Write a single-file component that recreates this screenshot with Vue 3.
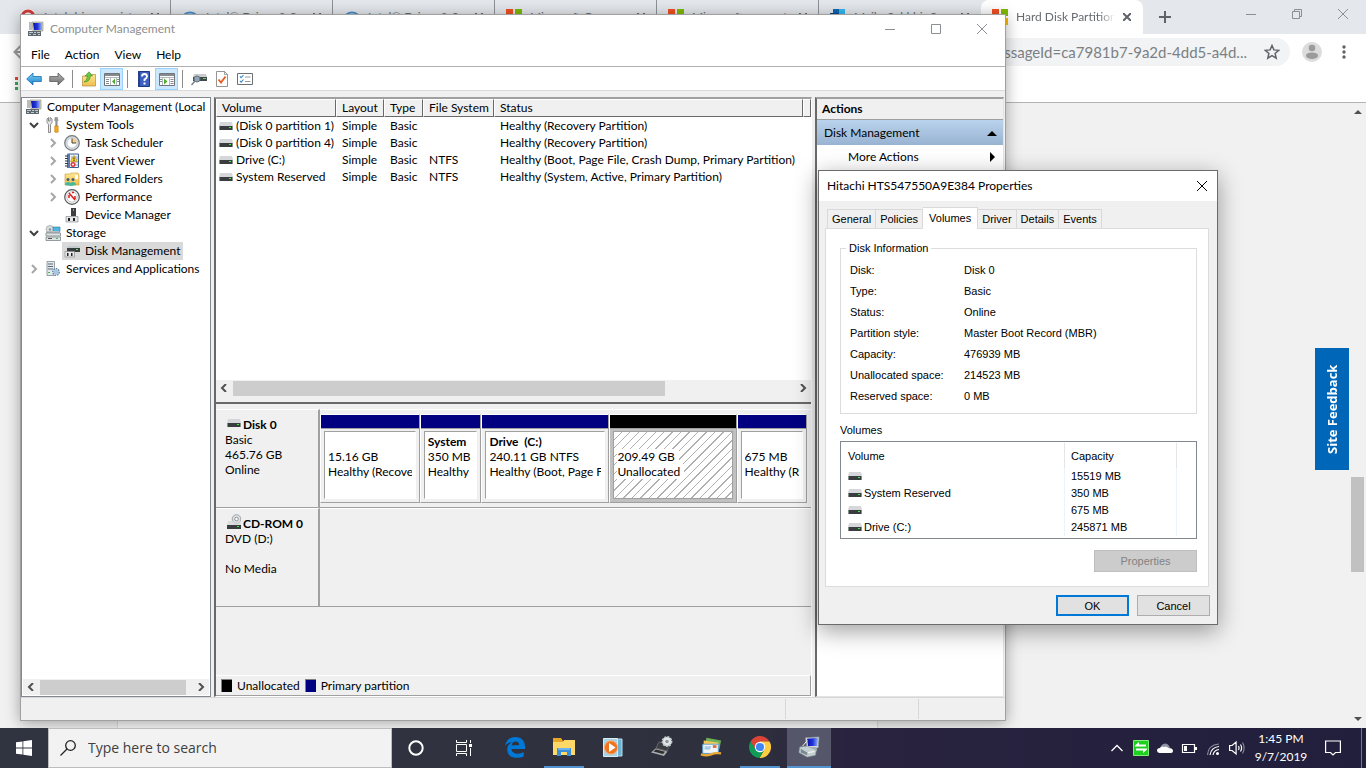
<script setup>
import { ref } from 'vue'

const backTabs = [
  { icon: 'fav-red', title: 'Intel driver assist' },
  { icon: 'fav-intel', title: 'Intel® Driver & S' },
  { icon: 'fav-intel', title: 'Intel® Driver & S' },
  { icon: 'fav-ms', title: 'Microsoft Comm' },
  { icon: 'fav-ms', title: 'Microsoft account' },
  { icon: 'fav-mail', title: 'Mail - Sukhbir S' },
]

const menus = ['File', 'Action', 'View', 'Help']

const tree = [
  { label: 'Computer Management (Local', icon: 'computer', level: 0, state: '' },
  { label: 'System Tools', icon: 'tools', level: 1, state: 'open' },
  { label: 'Task Scheduler', icon: 'clock', level: 2, state: 'closed' },
  { label: 'Event Viewer', icon: 'event', level: 2, state: 'closed' },
  { label: 'Shared Folders', icon: 'shared', level: 2, state: 'closed' },
  { label: 'Performance', icon: 'perf', level: 2, state: 'closed' },
  { label: 'Device Manager', icon: 'device', level: 2, state: 'leaf' },
  { label: 'Storage', icon: 'storage', level: 1, state: 'open' },
  { label: 'Disk Management', icon: 'diskmgmt', level: 2, state: 'leaf', selected: true },
  { label: 'Services and Applications', icon: 'services', level: 1, state: 'closed' },
]

const volumes = [
  { name: '(Disk 0 partition 1)', fs: '', status: 'Healthy (Recovery Partition)' },
  { name: '(Disk 0 partition 4)', fs: '', status: 'Healthy (Recovery Partition)' },
  { name: 'Drive (C:)', fs: 'NTFS', status: 'Healthy (Boot, Page File, Crash Dump, Primary Partition)' },
  { name: 'System Reserved', fs: 'NTFS', status: 'Healthy (System, Active, Primary Partition)' },
]

const partitions = [
  { name: '', size: '15.16 GB', status: 'Healthy (Recove', share: 100 },
  { name: 'System', size: '350 MB N', status: 'Healthy', share: 61 },
  { name: 'Drive  (C:)', size: '240.11 GB NTFS', status: 'Healthy (Boot, Page F', share: 129 },
  { name: '', size: '209.49 GB', status: 'Unallocated', share: 128, free: true },
  { name: '', size: '675 MB', status: 'Healthy (R', share: 70 },
]

const dialogTabs = ['General', 'Policies', 'Volumes', 'Driver', 'Details', 'Events']
const activeTab = ref('Volumes')

const diskInfo = [
  ['Disk:', 'Disk 0'],
  ['Type:', 'Basic'],
  ['Status:', 'Online'],
  ['Partition style:', 'Master Boot Record (MBR)'],
  ['Capacity:', '476939 MB'],
  ['Unallocated space:', '214523 MB'],
  ['Reserved space:', '0 MB'],
]

const diskVolumes = [
  ['', '15519 MB'],
  ['System Reserved', '350 MB'],
  ['', '675 MB'],
  ['Drive (C:)', '245871 MB'],
]

const taskApps = [
  { icon: 'edge', label: 'Microsoft Edge', state: '' },
  { icon: 'explorer', label: 'File Explorer', state: 'running' },
  { icon: 'player', label: 'Media Player', state: '' },
  { icon: 'laptop', label: 'System Settings', state: '' },
  { icon: 'livemail', label: 'Mail', state: '' },
  { icon: 'chrome', label: 'Google Chrome', state: 'running' },
  { icon: 'mmc', label: 'Computer Management', state: 'active' },
]
</script>

<template>
  <svg class="defs" aria-hidden="true">
    <defs>
      <linearGradient id="g-blue" x1="0" y1="0" x2="0" y2="1"><stop offset="0" stop-color="#7fd0f7" /><stop offset="1" stop-color="#1784cf" /></linearGradient>
      <linearGradient id="g-grey" x1="0" y1="0" x2="0" y2="1"><stop offset="0" stop-color="#b5b5b5" /><stop offset="1" stop-color="#6d6d6d" /></linearGradient>
      <linearGradient id="g-screen" x1="0" y1="0" x2="1" y2="0"><stop offset="0" stop-color="#0a12a8" /><stop offset=".5" stop-color="#2233d8" /><stop offset="1" stop-color="#8fb4ff" /></linearGradient>
      <linearGradient id="g-folder" x1="0" y1="0" x2="0" y2="1"><stop offset="0" stop-color="#ffe694" /><stop offset="1" stop-color="#f0bf4a" /></linearGradient>
    </defs>
    <symbol id="fav-red" viewBox="0 0 16 16"><circle cx="8" cy="8" r="8" fill="#fff" /><circle cx="8" cy="8" r="6" fill="none" stroke="#d93a3a" stroke-width="3" /></symbol>
    <symbol id="fav-intel" viewBox="0 0 16 16"><ellipse cx="8" cy="8.500" rx="7" ry="5" fill="#dfe9f2" stroke="#4b8fc8" stroke-width="2" /></symbol>
    <symbol id="fav-ms" viewBox="0 0 16 16"><path fill="#f25022" d="M0 0h7v7H0z" /><path fill="#7fba00" d="M9 0h7v7H9z" /><path fill="#00a4ef" d="M0 9h7v7H0z" /><path fill="#ffb900" d="M9 9h7v7H9z" /></symbol>
    <symbol id="fav-mail" viewBox="0 0 16 16"><path fill="#1066b5" d="M3 0h6v5H3z" /><path fill="#35b8f1" d="M9 0h6v5H9z" /><path fill="#0a4d92" d="M0 4h9v9H0z" /></symbol>
    <symbol id="computer" viewBox="0 0 16 16">
      <path fill="#d6d2c4" stroke="#8c897c" stroke-width=".6" d="M4 1h11v9H5z" /><path fill="url(#g-screen)" d="M5 2h9v7H6z" /><path fill="#a9a698" d="M8 10h4v2H8z" />
      <path fill="#b9bcbf" d="M1 1h3v8H1z" /><path fill="#5d6870" d="M0 10h13v5H0z" /><path fill="#c3c8cb" d="M1 11h4v1H1zM6 11h2v1H6zM9 11h3v1H9zM1 13h2v1H1zM5 13h3v1H5zM10 13h2v1h-2z" />
    </symbol>
    <symbol id="tools" viewBox="0 0 16 16">
      <path fill="#e8e8e8" stroke="#747474" stroke-width=".8" d="M3.500 15.500V7.500L2 5.500V2l1.500-1.500V4h1.500V.5L7 2v3.500L5.500 7.500v8z" />
      <path fill="#9b9b9b" stroke="#666" stroke-width=".4" d="M10 .5h2.500l.5 3-.8 1V9h-1.500V4.500l-1-1z" /><path fill="#f5a81c" stroke="#bd7506" stroke-width=".5" d="M9.700 9h3.500v6q-1.700 1.200-3.500 0z" />
    </symbol>
    <symbol id="clock" viewBox="0 0 16 16"><circle cx="8" cy="8" r="7.300" fill="#d7dbe0" stroke="#75787c" stroke-width="1.200" /><circle cx="8" cy="8" r="5" fill="#fff" stroke="#9fb3c7" stroke-width=".6" /><path fill="#f3cf83" d="M8 8V3.200A4.800 4.800 0 0 1 12.800 8z" /><path fill="none" stroke="#444" d="M8 3.500V8h4" /></symbol>
    <symbol id="event" viewBox="0 0 16 16"><path fill="#eef3fa" stroke="#41608f" d="M3.500 1h11v13.500h-11z" /><path fill="#5a7bb0" d="M3 1h3v14H3z" /><path stroke="#91a6c6" d="M7 4h7M7 6h7M7 9h7M7 12h7" /><path stroke="#333" d="M1 3h3M1 5.500h3M1 8h3M1 10.500h3M1 13h3" /><path fill="#ffd535" stroke="#b88d00" stroke-width=".6" d="M10 2.500l3.500 6h-7z" /><path stroke="#222" d="M10 4.500v2M10 7v1" /><circle cx="9" cy="11.500" r="2.500" fill="#e0393b" /><circle cx="9" cy="11.500" r="1" fill="#fff" /></symbol>
    <symbol id="shared" viewBox="0 0 16 16"><path fill="url(#g-folder)" stroke="#c79a36" stroke-width=".6" d="M1 3h5l1-1h7l1 2v10H1z" /><path fill="#fff" d="M11 4h3v4h-3z" /><circle cx="4" cy="8.500" r="1.500" fill="#425d78" /><circle cx="9" cy="8.500" r="1.500" fill="#425d78" /><path fill="#47b89b" d="M1 14q0-3 3-3 2 0 2.500 1Q7 11 9 11q3 0 3 3l-5 1z" /></symbol>
    <symbol id="perf" viewBox="0 0 16 16"><circle cx="8" cy="8" r="7.300" fill="#f4f4f4" stroke="#55585b" stroke-width="1.200" /><circle cx="8" cy="8" r="5.200" fill="#fff" stroke="#c7c7c7" /><path fill="none" stroke="#e01b1b" stroke-width="1.500" d="M5 9V6M5 4l6 7M11 10V7M8 3.500h2" /></symbol>
    <symbol id="device" viewBox="0 0 16 16"><path fill="#3d3f42" d="M7 1h5v8H7z" /><path fill="#50c653" d="M9 2h1v2H9z" /><path fill="#e3e5e6" stroke="#8a8d8f" stroke-width=".7" d="M2 9.500h12v5.500H2z" /><path fill="#222" d="M4 11h2v3H4zM9 11h2v3H9z" /></symbol>
    <symbol id="storage" viewBox="0 0 16 16"><circle cx="5" cy="4.500" r="4" fill="#d8dde0" stroke="#8d9498" stroke-width=".6" /><circle cx="5" cy="4.500" r="1.200" fill="#8d9498" /><path fill="#49b7e4" stroke="#38758f" stroke-width=".6" d="M8 2h7v4.500H8z" /><path fill="#b7bcc0" d="M1 8l1-2h12l1 2z" /><path fill="#e0e3e5" stroke="#6e767a" stroke-width=".7" d="M1 8h14.500v3H1zM1 12h14.500v3.500H1z" /><path fill="#3bc14b" d="M11 13h2v1h-2z" /><path fill="#555" d="M3 13h4v1H3z" /></symbol>
    <symbol id="diskmgmt" viewBox="0 0 16 16"><path fill="#c5cacd" d="M4 3h11l1 2H3z" /><path fill="#3a3d40" d="M3 5h13v4H3z" /><path fill="#50e053" d="M12 6h2v1h-2z" /><path fill="#e8e9ea" stroke="#8a8d8f" stroke-width=".7" d="M1 8.500h9.500V14H1z" /><path fill="#222" d="M3 10h1.500v3H3zM7 10h1.500v3H7z" /></symbol>
    <symbol id="services" viewBox="0 0 16 16"><path fill="#e3e8ec" stroke="#7e8b96" stroke-width=".8" d="M2 .5h7.500v14H2z" /><path stroke="#5a6a78" d="M3 3h5M3 5.500h5M3 8h5" /><path fill="#44b94c" d="M3 11h2v1H3z" /><circle cx="11" cy="11" r="3.300" fill="#c0d7ea" stroke="#5683ab" stroke-width="1.300" stroke-dasharray="1.500 1" /><circle cx="11" cy="11" r="1.200" fill="#fff" stroke="#5683ab" stroke-width=".6" /></symbol>
    <symbol id="drive" viewBox="0 0 14 8"><path fill="#d5d7da" d="M1 0h12l1 4H0z" /><path fill="#3a3d40" d="M0 4h14v4H0z" /><path fill="#8a8d90" d="M0 4h1v4H0zM13 4h1v4h-1z" /><path fill="#3aee3a" d="M10 5h2v1h-2z" /></symbol>
    <symbol id="cdrom" viewBox="0 0 14 15"><circle cx="9.500" cy="5" r="4.300" fill="#dfe2e4" stroke="#9ea3a6" /><circle cx="9.500" cy="5" r="1.800" fill="#fff" stroke="#8c9194" /><path fill="#d5d7da" d="M1 7h12l1 4H0z" opacity=".75" /><path fill="#3a3d40" d="M0 11h14v4H0z" /><path fill="#3aee3a" d="M10 12h2v1h-2z" /></symbol>
    <symbol id="t-back" viewBox="0 0 16 16"><path fill="url(#g-blue)" stroke="#1b6ca8" stroke-width=".8" d="M.7 8L7 2v3.500h8.300v5H7V14z" /></symbol>
    <symbol id="t-fwd" viewBox="0 0 16 16"><path fill="url(#g-grey)" stroke="#5c5c5c" stroke-width=".8" d="M15.300 8L9 2v3.500H.7v5H9V14z" /></symbol>
    <symbol id="t-folder" viewBox="0 0 16 16"><path fill="url(#g-folder)" stroke="#b28e3d" stroke-width=".7" d="M1.500 5H8l1-1.500h5.500V15h-13z" /><path fill="#6cc644" stroke="#3a9222" stroke-width=".6" d="M3 11q3-1 3.500-6H4L8 .8 11.500 5H9.300q0 6-6.300 6z" /></symbol>
    <symbol id="t-tree" viewBox="0 0 16 16"><path fill="#fff" stroke="#71757a" d="M.5 2.500h15v12H.5z" /><path fill="#868b90" d="M1 3h14v2H1z" /><path stroke="#b5b9bd" d="M1 6.500h14M6.500 7v7M12.500 7v7" /><path stroke="#868b90" d="M2 8.500h3M2 10.500h3M2 12.500h3M13 8.500h2M13 10.500h2" /><path fill="#4cae32" d="M11 7.500v6L8 10.500z" /></symbol>
    <symbol id="t-action" viewBox="0 0 16 16"><path fill="#fff" stroke="#71757a" d="M.5 2.500h15v12H.5z" /><path fill="#868b90" d="M1 3h14v2H1z" /><path stroke="#b5b9bd" d="M1 6.500h14M3.500 7v7M10.500 7v7" /><path stroke="#868b90" d="M11.500 8.500h3M11.500 10.500h3M11.500 12.500h3M1 8.500h2M1 10.500h2" /><path fill="#4cae32" d="M5 7.500v6l3.500-3z" /></symbol>
    <symbol id="t-help" viewBox="0 0 16 16"><path fill="#3f60bd" stroke="#1e3983" d="M2.500.5h11v15h-11z" /><path fill="#253f8a" d="M2 0h2v16H2z" /><path fill="none" stroke="#fff" stroke-width="1.800" d="M6 5.500Q6 3 8.500 3T11 5.500q0 1.500-2.500 3V10" /><path fill="#fff" d="M7.500 11.500h2v2h-2z" /></symbol>
    <symbol id="t-disk" viewBox="0 0 16 16"><path fill="#c9cccf" d="M3 3h12l1 3H2z" /><path fill="#44484c" d="M2 6h14v4H2z" /><path fill="#43df4a" d="M12 7h3v1h-3z" /><circle cx="6" cy="8" r="3" fill="#8fa7b6" stroke="#65727c" /><path stroke="#777f86" stroke-width="1.500" d="M4 10l-3.500 4" /></symbol>
    <symbol id="t-check" viewBox="0 0 16 16"><path fill="#fff" stroke="#7a7a7a" stroke-width=".8" d="M2.500.5h8l3 3v12h-11z" /><path fill="none" stroke="#7a7a7a" stroke-width=".7" d="M10.500.5v3h3" /><path fill="none" stroke="#e65a1e" stroke-width="1.800" d="M4.500 8.500l2.500 3 4.500-6" /></symbol>
    <symbol id="t-list" viewBox="0 0 16 16"><path fill="#fff" stroke="#6c6f72" d="M.5 2.500h15v11H.5z" /><path stroke="#999" d="M8 6h5.500M8 10.500h5.500" /><path fill="none" stroke="#3c8ac9" stroke-width="1.100" d="M3 5.500l1.200 1.200L6.500 4M3 10l1.200 1.200 2.300-2.700" /></symbol>
    <symbol id="edge" viewBox="0 0 22 22"><path fill="#0078d7" d="M1 10C2 4 6 1 11.500 1 17.500 1 21 5 21 10.500V13H7.500c.3 3.300 3 4.700 6 4.700 2.300 0 4.500-.7 6.200-1.700v4.300c-2 1-4.300 1.500-7 1.500C7 21.800 3.200 18.500 3.200 13.500c0-3.500 2-6 4.800-7.300C4.800 6.400 2.500 8 1 10zm6.600-.7h7.600C15.200 6.800 14 5.500 11.700 5.500 9.500 5.500 8 7 7.600 9.300z" /></symbol>
    <symbol id="explorer" viewBox="0 0 22 22"><path fill="#e7a829" d="M0 2h8l2 3h12v4H0z" /><path fill="#ffd867" d="M0 6h10l1-2h11v15H0z" /><path fill="#3b8fd9" d="M4 12h14v8h-4v-4H8v4H4z" /><path fill="#6db4ee" d="M5 12h12v2H5z" /></symbol>
    <symbol id="player" viewBox="0 0 22 22"><path fill="#6cb3d8" stroke="#b9dfef" d="M5 3h15v17H5z" /><path fill="#a7d3e7" stroke="#d8edf5" d="M1.500 2.500h14v18h-14z" /><circle cx="9" cy="11.500" r="6.700" fill="#ee7622" stroke="#ffb37a" /><path fill="#fff" d="M7 7l6.500 4.500L7 16z" /></symbol>
    <symbol id="laptop" viewBox="0 0 22 22"><path fill="#3a3c3f" stroke="#77797c" stroke-width=".7" d="M8 6l11 2.500-3 6.500L5 12z" /><path fill="#a9abad" d="M4.500 12.500L16.500 15.500 13 20 0 16.500z" /><path fill="#2c2e30" d="M5 13.500l9 2.200-2 2.300-9.500-2.500z" /><circle cx="16" cy="5.500" r="4.500" fill="#e4e8eb" stroke="#c4cbd0" stroke-width="1.800" stroke-dasharray="2 1" /><circle cx="16" cy="5.500" r="1.800" fill="#8f979c" /></symbol>
    <symbol id="livemail" viewBox="0 0 24 22"><path fill="#6ab356" d="M7 1l16 3-2 10L5 11z" /><path fill="#f3c65a" d="M4 4l16 2-1 12-15-2z" /><path fill="#eef5fb" stroke="#5fa5d6" d="M3 8h17v10H3z" /><path fill="#e66a38" d="M14 9h4v3h-4z" /><path stroke="#69a7d8" d="M5 11h7M5 13h6" /><path fill="none" stroke="#e9a735" stroke-width="2.500" d="M1 19q6 2 11 0t11-1" /></symbol>
    <symbol id="chrome" viewBox="0 0 22 22"><path fill="#db4437" d="M1.500 5.500A11 11 0 0 1 20.500 5.500L11 6 6 14z" /><path fill="#ffcd40" d="M20.500 5.500A11 11 0 0 1 10.500 22L15.500 13.500 11 5.500z" /><path fill="#0f9d58" d="M1.500 5.500A11 11 0 0 0 10.500 22L15 14 7 14z" /><circle cx="11" cy="11" r="5.200" fill="#fff" /><circle cx="11" cy="11" r="4.100" fill="#4285f4" /></symbol>
    <symbol id="mmc" viewBox="0 0 24 24"><path fill="#d7dbdc" stroke="#8b9497" stroke-width=".7" d="M8 2l15-1-1 12H10z" /><path fill="url(#g-screen)" d="M10 3l12-1-1 9H11z" /><path fill="#a7b1b5" d="M11 12h9l1 4H10z" /><path fill="#c5cfd2" stroke="#8b989e" stroke-width=".7" d="M2 12l8-1 10 4-1 6-9 2-9-5z" /><path fill="#7b898f" d="M3 14l7 4v3l-7-3z" /><path stroke="#fff" d="M5 11l5-6M11 18l7-1" /></symbol>
  </svg>

  <div class="desktop">
    <section class="browser" aria-label="Browser">
      <div class="tabstrip">
        <div v-for="(t, i) in backTabs" :key="i" class="tab">
          <svg class="i16"><use :href="'#' + t.icon" /></svg><span>{{ t.title }}</span>
          <svg class="x" viewBox="0 0 8 8"><path d="M0 0l8 8M8 0L0 8" stroke="#5f6368" stroke-width="2" /></svg>
        </div>
        <div class="tab current">
          <svg class="i16"><use href="#fav-ms" /></svg><span>Hard Disk Partition</span>
          <svg class="x" viewBox="0 0 8 8"><path d="M0 0l8 8M8 0L0 8" stroke="#5f6368" stroke-width="2" /></svg>
        </div>
        <svg class="plus" viewBox="0 0 12 12"><path d="M6 0v12M0 6h12" stroke="#5f6368" stroke-width="2" /></svg>
        <div class="wbtns">
          <svg viewBox="0 0 10 10"><path d="M0 5.500h10" /></svg>
          <svg viewBox="0 0 10 10"><path d="M.5 2.500h7v7h-7zM2.500 2.500v-2h7v7h-2" /></svg>
          <svg viewBox="0 0 10 10"><path d="M0 0l10 10M10 0L0 10" /></svg>
        </div>
      </div>
      <div class="addressbar">
        <svg class="back" viewBox="0 0 16 16"><path d="M15 8H2M8 1.500L1.500 8 8 14.500" fill="none" stroke="#9a9a9a" stroke-width="2" /></svg>
        <div class="omnibox">
          <span>messageId=ca7981b7-9a2d-4dd5-a4d...</span>
          <svg class="i16" viewBox="0 0 16 16"><path d="M8 1.500l1.900 4.400 4.800.4-3.600 3.100 1.100 4.700L8 11.600l-4.200 2.500 1.100-4.700L1.300 6.300l4.800-.4z" fill="none" stroke="#5f6368" stroke-width="1.500" /></svg>
        </div>
        <svg class="avatar" viewBox="0 0 20 20"><circle cx="10" cy="10" r="10" fill="#dcdcdc" /><circle cx="10" cy="6" r="3.300" fill="#9b9b9b" /><ellipse cx="10" cy="13.700" rx="6" ry="3.300" fill="#9b9b9b" /></svg>
        <svg class="dots" viewBox="0 0 4 14"><circle cx="2" cy="2" r="1.700" /><circle cx="2" cy="7" r="1.700" /><circle cx="2" cy="12" r="1.700" /></svg>
      </div>
      <div class="bookmarks">
        <svg viewBox="0 0 14 14"><path fill="#ea4335" d="M0 0h3v3H0zM5 0h3v3H5z" /><path fill="#34a853" d="M0 5h3v3H0zM0 10h3v3H0z" /><path fill="#4285f4" d="M5 5h3v3H5z" /><path fill="#fbbc05" d="M5 10h3v3H5z" /></svg>
      </div>
      <div class="page">
        <div class="content"><div class="card"></div></div>
        <button class="feedback" type="button">Site Feedback</button>
        <div class="vscroll">
          <svg viewBox="0 0 8 4"><path d="M0 4l4-4 4 4z" /></svg>
          <div class="thumb"></div>
          <svg viewBox="0 0 8 4"><path d="M0 0l4 4 4-4z" /></svg>
        </div>
      </div>
    </section>

    <section class="mgmt" aria-label="Computer Management">
      <header class="titlebar">
        <svg class="i16"><use href="#computer" /></svg>
        <h1>Computer Management</h1>
        <div class="wbtns">
          <svg viewBox="0 0 10 10"><path d="M0 5.500h10" /></svg>
          <svg viewBox="0 0 10 10"><path d="M.5.5h9v9h-9z" /></svg>
          <svg viewBox="0 0 10 10"><path d="M0 0l10 10M10 0L0 10" /></svg>
        </div>
      </header>
      <nav class="menubar"><button v-for="m in menus" :key="m" type="button">{{ m }}</button></nav>
      <div class="toolbar">
        <button type="button" aria-label="Back"><svg class="i16"><use href="#t-back" /></svg></button>
        <button type="button" aria-label="Forward"><svg class="i16"><use href="#t-fwd" /></svg></button>
        <i></i>
        <button type="button" aria-label="Up one level"><svg class="i16"><use href="#t-folder" /></svg></button>
        <button type="button" aria-label="Console tree" class="on"><svg class="i16"><use href="#t-tree" /></svg></button>
        <i></i>
        <button type="button" aria-label="Help"><svg class="i16"><use href="#t-help" /></svg></button>
        <button type="button" aria-label="Action pane" class="on"><svg class="i16"><use href="#t-action" /></svg></button>
        <i></i>
        <button type="button" aria-label="Disk"><svg class="i16"><use href="#t-disk" /></svg></button>
        <button type="button" aria-label="Check"><svg class="i16"><use href="#t-check" /></svg></button>
        <button type="button" aria-label="List"><svg class="i16"><use href="#t-list" /></svg></button>
      </div>
      <div class="workspace">
        <aside class="treepane">
          <ul>
            <li v-for="n in tree" :key="n.label" :class="['l' + n.level, { selected: n.selected }]">
              <span v-if="n.level" class="chev">
                <svg v-if="n.state === 'open'" viewBox="0 0 10 10"><path d="M1 3l4 4 4-4" stroke="#404040" /></svg>
                <svg v-else-if="n.state === 'closed'" viewBox="0 0 10 10"><path d="M3 1l4 4-4 4" stroke="#a6a6a6" /></svg>
              </span>
              <span class="node"><svg class="i16"><use :href="'#' + n.icon" /></svg><b>{{ n.label }}</b></span>
            </li>
          </ul>
          <div class="hscroll">
            <svg viewBox="0 0 8 8"><path d="M6 0L2 4l4 4" /></svg><div class="track"><div class="bar tree-bar"></div></div><svg viewBox="0 0 8 8"><path d="M2 0l4 4-4 4" /></svg>
          </div>
        </aside>

        <main class="center">
          <div class="vollist">
            <div class="tablewrap">
              <table>
                <colgroup><col class="c1" /><col class="c2" /><col class="c3" /><col class="c4" /><col class="c5" /><col /></colgroup>
                <thead><tr><th>Volume</th><th>Layout</th><th>Type</th><th>File System</th><th>Status</th><th></th></tr></thead>
                <tbody>
                  <tr v-for="v in volumes" :key="v.name">
                    <td class="first"><svg class="drv"><use href="#drive" /></svg>{{ v.name }}</td>
                    <td>Simple</td><td>Basic</td><td>{{ v.fs }}</td><td>{{ v.status }}</td><td></td>
                  </tr>
                </tbody>
              </table>
            </div>
            <div class="hscroll">
              <svg viewBox="0 0 8 8"><path d="M6 0L2 4l4 4" /></svg><div class="track"><div class="bar vol-bar"></div></div><svg viewBox="0 0 8 8"><path d="M2 0l4 4-4 4" /></svg>
            </div>
            <div class="lip"></div>
          </div>

          <div class="graph">
            <div class="diskrow">
              <div class="disklabel">
                <h2><svg class="drv"><use href="#drive" /></svg>Disk 0</h2>
                <p>Basic</p><p>465.76 GB</p><p>Online</p>
              </div>
              <div class="parts">
                <div v-for="(p, i) in partitions" :key="i" class="part" :class="{ free: p.free }" :style="{ flexGrow: p.share }">
                  <div class="band"></div>
                  <div class="body"><div class="box"><div class="txt">
                    <strong>{{ p.name }}</strong><span>{{ p.size }}</span><span>{{ p.status }}</span>
                  </div></div></div>
                </div>
              </div>
            </div>
            <div class="diskrow">
              <div class="disklabel">
                <h2><svg class="cd"><use href="#cdrom" /></svg>CD-ROM 0</h2>
                <p>DVD (D:)</p><p>&nbsp;</p><p>No Media</p>
              </div>
              <div class="parts"></div>
            </div>
            <div class="legend"><i class="black"></i>Unallocated<i class="navy"></i>Primary partition</div>
          </div>
        </main>

        <aside class="actions">
          <h2>Actions</h2>
          <button type="button" class="group">Disk Management<svg viewBox="0 0 10 10"><path d="M0 8l5-5 5 5z" /></svg></button>
          <button type="button" class="more">More Actions<svg viewBox="0 0 10 10"><path d="M3 0l5 5-5 5z" /></svg></button>
        </aside>
      </div>
      <footer class="status"><span></span><span></span><span></span></footer>
    </section>

    <section class="dialog" role="dialog" aria-labelledby="dlg-title">
      <header>
        <h1 id="dlg-title">Hitachi HTS547550A9E384 Properties</h1>
        <button type="button" aria-label="Close"><svg viewBox="0 0 10 10"><path d="M0 0l10 10M10 0L0 10" /></svg></button>
      </header>
      <div class="dtabs" role="tablist">
        <button v-for="t in dialogTabs" :key="t" type="button" role="tab" :aria-selected="t === activeTab" :class="{ sel: t === activeTab }" @click="activeTab = t">{{ t }}</button>
      </div>
      <div class="dpanel">
        <fieldset>
          <legend>Disk Information</legend>
          <dl><template v-for="r in diskInfo" :key="r[0]"><dt>{{ r[0] }}</dt><dd>{{ r[1] }}</dd></template></dl>
        </fieldset>
        <h2>Volumes</h2>
        <div class="dlist">
          <table>
            <colgroup><col /><col class="cap" /><col class="rest" /></colgroup>
            <thead><tr><th>Volume</th><th>Capacity</th><th></th></tr></thead>
            <tbody>
              <tr v-for="(v, i) in diskVolumes" :key="i">
                <td><svg class="drv"><use href="#drive" /></svg>{{ v[0] }}</td><td>{{ v[1] }}</td><td></td>
              </tr>
            </tbody>
          </table>
        </div>
        <div class="prow"><button type="button" class="btn wide" disabled>Properties</button></div>
      </div>
      <div class="dbtns"><button type="button" class="btn ok">OK</button><button type="button" class="btn">Cancel</button></div>
    </section>

    <footer class="taskbar">
      <button class="start" type="button" aria-label="Start"><svg viewBox="0 0 16 16"><path fill="#fff" d="M0 2.300l6.500-.9v6.200H0zM7.300 1.300L16 0v7.600H7.300zM0 8.400h6.500v6.200L0 13.700zM7.300 8.400H16V16l-8.700-1.300z" /></svg></button>
      <label class="search">
        <svg viewBox="0 0 16 16"><circle cx="10.500" cy="5.500" r="4.800" /><path d="M7 9L.5 15.500" /></svg>
        <input type="text" placeholder="Type here to search" aria-label="Type here to search" />
      </label>
      <button class="sys" type="button" aria-label="Cortana"><svg viewBox="0 0 16 16"><circle cx="8" cy="8" r="6.700" fill="none" stroke="#fff" stroke-width="2" /></svg></button>
      <button class="sys" type="button" aria-label="Task View"><svg viewBox="0 0 16 16"><path fill="none" stroke="#fff" d="M.5 0v2.500h10V0M.5 16v-2.500h10V16M.5 4.500h10v7H.5zM14.500 0v3M14.500 8v8" /><path fill="#fff" d="M13 4h3v3h-3z" /></svg></button>
      <div class="apps">
        <button v-for="a in taskApps" :key="a.icon" type="button" :aria-label="a.label" :class="a.state"><svg><use :href="'#' + a.icon" /></svg></button>
      </div>
      <div class="tray">
        <svg viewBox="0 0 16 16"><path fill="none" stroke="#fff" stroke-width="1.300" d="M2.500 11L8 5.500l5.500 5.500" /></svg>
        <svg viewBox="0 0 16 16"><path fill="#1fd021" stroke="#80f07a" d="M.5.5h15v15H.5z" /><path fill="#fff" d="M2 5.500L6 2v2.500h7v2H2zM14 9.500L10 13v-2.500H3v-2h11z" /></svg>
        <svg viewBox="0 0 16 16"><path fill="#8f92a0" d="M3 10q0-6 5.500-6.500Q12 4 13 8l-5 2z" /><path fill="#fff" d="M2.500 13Q0 12.500 0 10.500 0 8 3 8q1.500-2.500 4-1 2-1.500 4.500 1Q16 8 16 11q0 2-2 2z" /></svg>
        <svg viewBox="0 0 16 16"><path fill="none" stroke="#fff" stroke-width="1.200" d="M1.500 4.500h12v8h-12z" /><path fill="#fff" d="M3 6h3v5H3zM14 7h2v3h-2z" /></svg>
        <svg viewBox="0 0 16 16"><path fill="none" stroke="#8c8aa0" stroke-width="1.200" d="M2.500 15Q3 5 14 4" /><path fill="none" stroke="#fff" stroke-width="1.200" d="M5 15q1-7.500 9-8.500M8 15q1-5 6-5.500" /><circle cx="12.500" cy="13.500" r="1.500" fill="#fff" /></svg>
        <svg viewBox="0 0 16 16"><path fill="none" stroke="#fff" stroke-width="1.200" d="M.6 5.500h2.500l4-3.500v12l-4-3.500H.6zM9.500 6q1.200 2 0 4M11.500 4.500q2.200 3.500 0 7" /><path fill="none" stroke="#8c8aa0" stroke-width="1.100" d="M13.500 2.500q3.300 5.500 0 11" /></svg>
      </div>
      <div class="time"><span>1:45 PM</span><span>9/7/2019</span></div>
      <svg class="note" viewBox="0 0 16 16"><path fill="none" stroke="#fff" stroke-width="1.200" d="M.6 1h14.800v11.500H10.500L8 15l-2.500-2.500H.6z" /></svg>
      <i class="peek"></i>
    </footer>
  </div>
</template>

<style>
html, body, #app { height: 100%; }
body { margin: 0; overflow: hidden; }
</style>

<style scoped>
* { box-sizing: border-box; }
button { font: inherit; color: inherit; border: 0; padding: 0; margin: 0; background: none; }
h1, h2, p, ul, dl, dd { margin: 0; padding: 0; font: inherit; }
svg { display: block; flex: none; }
.defs { position: absolute; width: 0; height: 0; }
.i16 { width: 16px; height: 16px; }
.drv { width: 14px; height: 8px; }
.cd { width: 14px; height: 15px; }
.desktop { position: relative; height: 100%; display: flex; flex-direction: column; font: 12px/18px Lato, "Open Sans", sans-serif; color: #000; overflow: hidden; }

.browser { flex: 1; min-height: 0; display: flex; flex-direction: column; background: #fff; }
.tabstrip { display: flex; align-items: center; height: 34px; padding-left: 9px; background: #e4e8ec; color: #686c70; }
.tab { flex: 0 0 162px; height: 34px; display: flex; align-items: center; gap: 8px; padding-left: 11px; border-right: 1px solid #8e9297; overflow: hidden; white-space: nowrap; }
.tab:nth-child(6) { border-right: 0; }
.tab span { width: 99px; overflow: hidden; }
.tab.current { background: #fff; border: 0; border-radius: 8px 8px 0 0; }
.tab.current span { -webkit-mask-image: linear-gradient(90deg, #000 84%, transparent); mask-image: linear-gradient(90deg, #000 84%, transparent); }
.tab .x { width: 8px; height: 8px; }
.plus { width: 12px; height: 12px; margin-left: 16px; }
.wbtns { margin-left: auto; display: flex; gap: 36px; padding-right: 18px; }
.wbtns svg { width: 10px; height: 10px; }
.wbtns path { fill: none; stroke: #8b8e92; }
.tabstrip .wbtns { margin-bottom: 6px; }
.addressbar { display: flex; align-items: center; height: 36px; padding: 0 20px 0 13px; }
.back { width: 16px; height: 16px; }
.omnibox { flex: 1; height: 28px; margin: 0 12px 0 100px; padding-right: 10px; display: flex; align-items: center; justify-content: flex-end; gap: 17px; border-radius: 14px; background: #f1f3f4; color: #7c8084; font-size: 15px; }
.avatar { width: 20px; height: 20px; }
.dots { width: 4px; height: 14px; margin-left: 20px; fill: #5f6368; }
.bookmarks { height: 33px; padding: 7px 15px; border-bottom: 1px solid #b4b4b4; }
.bookmarks svg { width: 14px; height: 14px; }
.page { flex: 1; min-height: 0; display: flex; background: #f1f1f1; }
.content { flex: 1; display: flex; align-items: flex-end; padding-left: 117px; }
.card { width: 761px; height: 100%; background: #f9f9f9; border: 1px solid #dcdcdc; border-width: 0 1px; }
.feedback { align-self: flex-start; width: 34px; height: 122px; margin-top: 245px; background: #0067b8; color: #fff; font: 700 13px/18px "Open Sans", "Noto Sans", sans-serif; writing-mode: vertical-rl; text-orientation: mixed; rotate: 180deg; }
.vscroll { width: 17px; display: flex; flex-direction: column; align-items: center; padding: 7px 0; background: #f1f1f1; }
.vscroll svg { width: 8px; height: 4px; fill: #505050; }
.thumb { width: 13px; height: 95px; margin: 363px 0 auto; background: #c1c1c1; }

.mgmt { position: absolute; left: 20px; top: 14px; right: 360px; bottom: 47px; display: flex; flex-direction: column; background: #f0f0f0; border: 1px solid #a0a0a0; box-shadow: 0 2px 14px rgba(0, 0, 0, .35); }
.titlebar { display: flex; align-items: center; gap: 6px; height: 28px; padding-left: 7px; background: #fff; color: #8f8f8f; }
.menubar { display: flex; gap: 15px; height: 24px; padding: 0 10px; background: #fff; border-bottom: 1px solid #b0b0b0; }
.toolbar { display: flex; align-items: flex-end; height: 24px; padding-left: 1px; background: #fff; border-bottom: 1px solid #dadada; }
.toolbar button { width: 23px; height: 22px; display: flex; align-items: center; justify-content: center; }
.toolbar .on { background: #cce8ff; border: 1px solid #99d1ff; }
.toolbar i { align-self: center; width: 1px; height: 18px; margin: 0 4px; background: #8d8d8d; }
.workspace { flex: 1; min-height: 0; display: grid; grid-template-columns: 190px minmax(0, 1fr) 189px; gap: 3px; padding: 6px 1px 0 0; }
.treepane { display: flex; flex-direction: column; background: #fff; border: 1px solid #828790; min-width: 0; overflow: hidden; }
.treepane ul { flex: 1; list-style: none; }
.treepane li { display: flex; height: 18px; white-space: nowrap; }
.l0 { padding-left: 2px; }
.l1 { padding-left: 4px; }
.l2 { padding-left: 23px; }
.chev { width: 16px; display: flex; align-items: center; justify-content: center; margin-right: 1px; }
.chev svg { width: 10px; height: 10px; fill: none; stroke-width: 2; }
.node { display: flex; align-items: center; gap: 5px; padding: 0 3px 0 2px; }
.node b { font-weight: 400; }
.selected .node { background: #d9d9d9; }
.hscroll { display: flex; align-items: center; height: 16px; margin: 1px; padding: 0 4px; background: #f0f0f0; }
.hscroll svg { width: 8px; height: 8px; fill: none; stroke: #505050; stroke-width: 2; }
.track { flex: 1; height: 15px; margin: 0 5px; }
.bar { height: 15px; background: #cdcdcd; }
.tree-bar { width: 96%; }
.vol-bar { width: 77%; }

.center { display: flex; flex-direction: column; min-width: 0; border: 2px solid #696969; border-top-color: #a0a0a0; border-width: 2px 1px 1px 2px; border-right-color: #fff; border-bottom-color: #fff; }
.vollist { flex: 0 0 305px; display: flex; flex-direction: column; background: #fff; }
.tablewrap { flex: 1; overflow: hidden; }
table { width: 100%; table-layout: fixed; border-collapse: separate; border-spacing: 0; }
.c1 { width: 120px; } .c2 { width: 48px; } .c3 { width: 39px; } .c4 { width: 71px; } .c5 { width: 309px; }
.vollist th { height: 18px; padding: 0 0 0 5px; background: #f0f0f0; border: 1px solid #fff; border-right-color: #696969; border-bottom-color: #696969; font-weight: 400; text-align: left; line-height: 16px; white-space: nowrap; }
.vollist td { height: 17px; padding: 0 0 0 6px; line-height: 17px; white-space: nowrap; }
.vollist td.first { padding-left: 3px; }
td .drv { display: inline-block; margin-right: 3px; }
.vollist .hscroll { margin: 0; }
.lip { height: 8px; background: #f0f0f0; border-bottom: 2px solid #696969; }
.graph { flex: 1; display: flex; flex-direction: column; padding-top: 5px; background: #f0f0f0; }
.diskrow { display: grid; grid-template-columns: 104px minmax(0, 1fr); height: 99px; }
.disklabel { padding: 7px 0 0 9px; line-height: 15px; border: 1px solid #fff; border-left: 0; border-right: 2px solid #a0a0a0; border-bottom-color: #a0a0a0; }
.disklabel h2 { display: flex; align-items: center; gap: 2px; height: 15px; padding-left: 2px; font-weight: 700; }
.disklabel .drv, .disklabel .cd { margin-bottom: 4px; }
.parts { display: flex; padding: 4px 4px 4px 0; border-top: 1px solid #fff; border-bottom: 1px solid #a0a0a0; }
.part { flex: 1 1 0; min-width: 0; display: flex; flex-direction: column; border: 1px solid #fff; border-right: 1px solid #a0a0a0; border-bottom-color: #a0a0a0; }
.band { height: 13px; background: #000080; }
.free .band { background: #000; }
.body { flex: 1; display: flex; padding: 2px 3px 3px; border-top: 1px solid #a0a0a0; }
.box { flex: 1; min-width: 0; padding: 2px 3px 0; overflow: hidden; background: #fff; border: 1px solid #a0a0a0; border-right-color: #fff; border-bottom-color: #fff; }
.free .body { background: #c0c0c0; }
.free .box { border-color: #a0a0a0; background: repeating-linear-gradient(135deg, #fff 0 5px, #b0b0b0 5px 6px); }
.txt { display: flex; flex-direction: column; align-items: flex-start; overflow: hidden; white-space: pre; line-height: 15px; }
.txt strong { height: 15px; font-weight: 700; }
.free .txt span { background: #fff; padding-right: 4px; }
.legend { display: flex; align-items: center; height: 21px; margin-top: auto; padding-left: 5px; border-top: 1px solid #fff; border-bottom: 1px solid #a0a0a0; border-right: 1px solid #a0a0a0; }
.legend i { width: 11px; height: 13px; margin-right: 5px; background: #000; border: 1px solid #808080; border-width: 1px 0 0 1px; }
.legend .navy { margin-left: 5px; background: #000080; }

.actions { background: #fff; border: 2px solid #696969; border-top-color: #a0a0a0; border-width: 2px 1px 1px 2px; border-right-color: #e3e3e3; border-bottom-color: #e3e3e3; }
.actions h2 { height: 21px; padding-left: 5px; line-height: 20px; background: #f0f0f0; border-bottom: 1px solid #a0a0a0; font-weight: 700; }
.actions button { display: flex; align-items: center; justify-content: space-between; width: 100%; padding-right: 6px; text-align: left; }
.actions .group { height: 25px; padding-left: 7px; background: linear-gradient(#bad3ed, #98b3d2); }
.actions .more { height: 24px; padding-left: 31px; }
.actions svg { width: 10px; height: 10px; }
.status { display: grid; grid-template-columns: 1fr 133px 87px; height: 23px; padding: 1px 0; border-top: 1px solid #d7d7d7; }
.status span + span { border-left: 1px solid #d7d7d7; }

.dialog { position: absolute; left: 818px; top: 170px; width: 400px; background: #f0f0f0; border: 1px solid #6b6b6b; box-shadow: 0 6px 22px rgba(0, 0, 0, .38); font: 11px/16px "Liberation Sans", Arial, sans-serif; }
.dialog header { display: flex; align-items: center; justify-content: space-between; height: 30px; padding: 0 10px 0 8px; background: #fff; font: 12px/18px Lato, "Open Sans", sans-serif; }
.dialog header svg { width: 10px; height: 10px; fill: none; stroke: #000; }
.dtabs { display: flex; align-items: flex-end; height: 27px; padding-left: 8px; }
.dtabs button { height: 19px; padding: 0 4px; background: #f0f0f0; border: 1px solid #d9d9d9; border-left-width: 0; border-bottom: 0; }
.dtabs button:first-child { border-left-width: 1px; }
.dtabs .sel { position: relative; height: 22px; padding: 0 6px 2px; margin-bottom: -1px; background: #fff; }
.dpanel { margin: 0 8px 0 6px; padding: 11px 11px 14px 14px; background: #fff; border: 1px solid #dcdcdc; }
fieldset { margin: 0; padding: 4px 9px 6px; border: 1px solid #dcdcdc; min-width: 0; }
legend { margin-left: -4px; padding: 0 3px; }
dl { display: grid; grid-template-columns: 114px 1fr; line-height: 21px; }
.dpanel h2 { margin: 8px 0 3px; }
.dlist { height: 98px; padding: 1px; border: 1px solid #828790; }
.dlist .cap { width: 112px; } .dlist .rest { width: 18px; }
.dlist th { height: 25px; padding: 0 6px; font-weight: 400; text-align: left; border-right: 1px solid #e5e5e5; }
.dlist td { height: 17px; padding: 0 6px; border-right: 1px solid #eaf4fc; white-space: nowrap; line-height: 17px; }
.dlist th:last-child, .dlist td:last-child { border-right: 0; }
.dlist .drv { margin-right: 2px; }
.prow { display: flex; justify-content: flex-end; margin-top: 11px; }
.btn { width: 73px; height: 21px; background: #e1e1e1; border: 1px solid #adadad; }
.btn.ok { border: 2px solid #0078d7; }
.btn.wide { width: 103px; height: 22px; background: #ccc; border-color: #bfbfbf; color: #838383; }
.dbtns { display: flex; justify-content: flex-end; gap: 8px; padding: 8px 7px 8px 0; }

.taskbar { display: flex; align-items: stretch; height: 40px; position: relative; background: linear-gradient(90deg, #303441, #2f303d 55%, #29233f 62%, #211f3c); color: #fff; }
.taskbar button { display: flex; align-items: center; justify-content: center; }
.start { width: 48px; }
.start svg, .sys svg { width: 16px; height: 16px; }
.search { flex: 0 1 344px; display: flex; align-items: center; gap: 12px; padding-left: 11px; background: #f2f2f2; border: 1px solid #bcbcbc; }
.search svg { width: 16px; height: 16px; fill: none; stroke: #222; stroke-width: 1.3; }
.search input { flex: 1; min-width: 0; border: 0; outline: 0; padding: 0; background: none; font: 14px/20px "Open Sans", "Noto Sans", sans-serif; color: #333; }
.search input::placeholder { color: #404040; opacity: 1; }
.sys { width: 48px; }
.apps { display: flex; gap: 5px; padding-left: 5px; }
.apps button { width: 44px; border-bottom: 2px solid transparent; }
.apps svg { width: 22px; height: 22px; }
.apps .running { background: linear-gradient(#5393d0, #5393d0) center bottom / 40px 2px no-repeat border-box; }
.apps .active { background: #55566a; border-bottom-color: #5393d0; }
.tray { display: flex; align-items: center; gap: 8px; margin-left: auto; }
.tray svg { width: 16px; height: 16px; }
.time { display: flex; flex-direction: column; align-items: center; justify-content: center; width: 72px; margin-right: 8px; line-height: 18px; }
.note { width: 16px; height: 16px; align-self: center; margin-right: 20px; }
.peek { width: 5px; border-left: 1px solid #77758a; }
</style>
